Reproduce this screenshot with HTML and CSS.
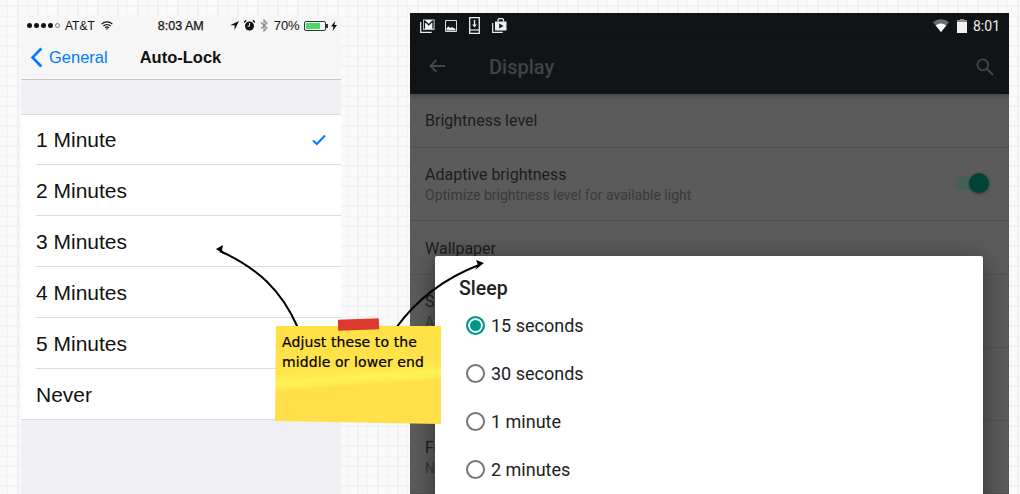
FILE: index.html
```html
<!DOCTYPE html>
<html lang="en">
<head>
    <meta charset="UTF-8">
    <title>Auto-Lock and Sleep settings</title>
    <link rel="stylesheet" href="styles.css">
</head>
<body>

<div class="board">
    <!-- iOS screen -->
    <div class="ios">
        <div class="ios-status">
            <span class="dots"><i></i><i></i><i></i><i></i><i class="empty"></i></span>
            <span class="carrier">AT&amp;T</span>
            <svg class="ios-wifi" width="12" height="9" viewBox="0 0 12 9"><path d="M.6 3.100a7.800 7.800 0 0 1 10.800 0M2.400 5a5.200 5.200 0 0 1 7.200 0M4.200 6.800a2.600 2.600 0 0 1 3.600 0" fill="none" stroke="#111" stroke-width="1.200"/><path d="M6 9 4.900 7.700a1.600 1.600 0 0 1 2.200 0z" fill="#111"/></svg>
            <span class="ios-time">8:03 AM</span>
            <svg class="ios-loc" width="9" height="9" viewBox="0 0 9 9"><path d="M9 0 0 4.200h4.600V9z" fill="#111"/></svg>
            <svg class="ios-alarm" width="11" height="11" viewBox="0 0 11 11"><circle cx="5.500" cy="6" r="4.500" fill="#111"/><path d="M5.500 3v3.200H3.500" fill="none" stroke="#f5f5f6" stroke-width="1"/><path d="M0 2.400 2.200.3M11 2.400 8.800.3" stroke="#111" stroke-width="1.400"/></svg>
            <svg class="ios-bt" width="8" height="13" viewBox="0 0 8 13"><path d="M1 3.500 7 9 4 12V1l3 3-6 5.500" fill="none" stroke="#8e8e8e" stroke-width="1.200"/></svg>
            <span class="ios-pct">70%</span>
            <span class="ios-battery"><span class="ios-charge"></span></span>
            <svg class="ios-bolt" width="6" height="10" viewBox="0 0 6 10"><path d="M4.200 0 0 5.600h2.400L1.600 10 6 4H3.400z" fill="#111"/></svg>
        </div>
        <div class="ios-nav">
            <svg class="chevron" width="13" height="21" viewBox="0 0 13 21"><path d="M11.300 1.500 2.500 10.500l8.800 9" fill="none" stroke="#007aff" stroke-width="2.600"/></svg>
            <span class="back-label">General</span>
            <span class="nav-title">Auto-Lock</span>
        </div>
        <ul class="ios-list">
            <li>1 Minute
                <svg class="check" width="14" height="12" viewBox="0 0 14 12"><path d="M1 6.600 4.800 10 13 1.500" fill="none" stroke="#007aff" stroke-width="2"/></svg>
            </li>
            <li>2 Minutes</li>
            <li>3 Minutes</li>
            <li>4 Minutes</li>
            <li>5 Minutes</li>
            <li>Never</li>
        </ul>
    </div>

    <!-- Android screen, dimmed behind the dialog -->
    <div class="android">
        <div class="droid-status">
            <svg width="15" height="14" viewBox="0 0 15 14"><path d="M.7 3v10.300h11" fill="none" stroke="#eee" stroke-width="1.200"/><path d="M3 .5h11.500v10.300H3z" fill="#eee"/><path d="M4.400 1.200v8.600M13 1.200v8.600M4.400 1.600l4.400 4.200 4.200-4.200" fill="none" stroke="#15181a" stroke-width="1.300"/></svg>
            <svg class="gap-image" width="12" height="12" viewBox="0 0 12 12"><path d="M.5.5h11v11H.5z" fill="#15181a" stroke="#ddd"/><path d="M1.500 10.500V8l2-1.500 2 1.500 1.500-1 3.500 2v1.500z" fill="#eee"/></svg>
            <svg class="gap-phone" width="11" height="17" viewBox="0 0 11 17"><path d="M.7.7h9.600v15.600H.7z" fill="none" stroke="#eee" stroke-width="1.300"/><path d="M.7 13h9.600" stroke="#eee" stroke-width="1.200"/><path d="M5.500 3v5.500" stroke="#eee" stroke-width="1.400"/><path d="M3.200 7.500h4.600L5.500 10.500z" fill="#eee"/></svg>
            <svg class="gap-store" width="15" height="15" viewBox="0 0 15 15"><path d="M.7 5v9.300h10" fill="none" stroke="#eee" stroke-width="1.200"/><path d="M3 3.500h11.500v9H3z" fill="#eee"/><path d="M6 3.500V2a1.500 1.500 0 0 1 1.500-1.300h2.500A1.500 1.500 0 0 1 11.500 2v1.500" fill="none" stroke="#eee" stroke-width="1.300"/><path d="M7.200 5.500v5l4.300-2.500z" fill="#15181a"/></svg>
            <span class="droid-right">
                <svg width="16" height="13" viewBox="0 0 16 13"><path d="M8 13 0 3.200a12.500 12.500 0 0 1 16 0z" fill="#6a6c6d"/><path d="M8 13 2.700 6.500a8.400 8.400 0 0 1 10.600 0z" fill="#fff"/></svg>
                <svg class="droid-batt" width="10" height="14" viewBox="0 0 10 14"><path d="M3 0h4v1.500h3V14H0V1.500h3z" fill="#f1f1f1"/><path d="M3 0h4v1.500h3V3H0V1.500h3z" fill="#8a8c8d"/></svg>
                <span class="droid-time">8:01</span>
            </span>
        </div>
        <div class="droid-bar">
            <svg class="droid-back" width="16" height="14" viewBox="0 0 16 14"><path d="M16 7H2M7.500 1 1.500 7l6 6" fill="none" stroke="#43484a" stroke-width="1.800"/></svg>
            <span class="droid-title">Display</span>
            <svg class="droid-search" width="18" height="18" viewBox="0 0 18 18"><circle cx="6.800" cy="6.800" r="5.400" fill="none" stroke="#43484a" stroke-width="1.800"/><path d="M10.800 10.800 17 17" stroke="#43484a" stroke-width="2"/></svg>
        </div>
        <div class="droid-row short first"><span class="row-name">Brightness level</span></div>
        <div class="droid-row">
            <span class="row-name">Adaptive brightness</span>
            <span class="row-sub">Optimize brightness level for available light</span>
            <span class="toggle"><span class="toggle-thumb"></span></span>
        </div>
        <div class="droid-row short"><span class="row-name">Wallpaper</span></div>
        <div class="droid-row">
            <span class="row-name">Sleep</span>
            <span class="row-sub">After 1 minute</span>
        </div>
        <div class="droid-row">
            <span class="row-name">Daydream</span>
            <span class="row-sub">Clock</span>
        </div>
        <div class="droid-row">
            <span class="row-name">Font size</span>
            <span class="row-sub">Normal</span>
        </div>

        <div class="dialog">
            <h2>Sleep</h2>
            <div class="option"><span class="radio on"></span>15 seconds</div>
            <div class="option"><span class="radio"></span>30 seconds</div>
            <div class="option"><span class="radio"></span>1 minute</div>
            <div class="option"><span class="radio"></span>2 minutes</div>
        </div>
    </div>

    <!-- Annotation -->
    <svg class="arrows" width="1020" height="494" viewBox="0 0 1020 494">
        <path d="M298 328C281 289 257 268 220 251" fill="none" stroke="#000" stroke-width="2"/>
        <path d="M216 249 223 245 222 250 225 255z" fill="#000"/>
        <path d="M396 328C417 299 445 278 479 265" fill="none" stroke="#000" stroke-width="2"/>
        <path d="M484 263 476 260 478 265 475 270z" fill="#000"/>
    </svg>
    <div class="note">
        <span class="tape"></span>
        <p>Adjust these to the<br>middle or lower end</p>
    </div>
</div>

</body>
</html>
```

FILE: styles.css
```css
body {
    margin: 0;
    font-family: "Liberation Sans", Arial, sans-serif;
}
.board {
    position: relative;
    display: flex;
    align-items: flex-start;
    height: 494px;
    overflow: hidden;
    background-color: #fafafa;
    background-image:
        linear-gradient(90deg, transparent 17px, #f1f1f1 17px, #f1f1f1 19px, transparent 19px),
        linear-gradient(90deg, transparent 7px, #f4f4f4 7px, #f4f4f4 8px, transparent 8px),
        linear-gradient(transparent 5px, #f1f1f1 5px, #f1f1f1 7px, transparent 7px),
        linear-gradient(transparent 16px, #f4f4f4 16px, #f4f4f4 17px, transparent 17px);
    background-size: 20px 20px;
}

/* iOS */
.ios {
    flex: none;
    width: 320px;
    height: 479px;
    margin: 15px 0 0 21px;
    background-color: #efeff4;
}
.ios-status {
    display: flex;
    align-items: center;
    height: 21px;
    padding-left: 6px;
    background-color: #f6f6f7;
    font-size: 12px;
    color: #111;
}
.dots {
    display: flex;
    gap: 2px;
}
.dots i {
    width: 5px;
    height: 5px;
    border-radius: 50%;
    background-color: #111;
}
.dots i.empty {
    box-sizing: border-box;
    border: 1px solid #777;
    background-color: transparent;
}
.carrier {
    margin-left: 5px;
}
.ios-wifi {
    margin-left: 6px;
}
.ios-time {
    margin-left: 45px;
    font-size: 12.500px;
    -webkit-text-stroke: 0.25px #111;
}
.ios-loc {
    margin-left: 26px;
}
.ios-alarm {
    margin-left: 5px;
}
.ios-bt {
    margin-left: 5px;
}
.ios-pct {
    margin-left: 6px;
    font-size: 13px;
}
.ios-battery {
    position: relative;
    box-sizing: border-box;
    width: 22px;
    height: 10px;
    margin-left: 4px;
    border: 1px solid #333;
    border-radius: 2px;
    padding: 1px;
}
.ios-battery::after {
    content: "";
    position: absolute;
    right: -3px;
    top: 2px;
    width: 2px;
    height: 4px;
    background-color: #333;
}
.ios-charge {
    display: block;
    width: 14px;
    height: 6px;
    background-color: #4cd964;
}
.ios-bolt {
    margin-left: 5px;
}
.ios-nav {
    display: flex;
    align-items: center;
    box-sizing: border-box;
    height: 44px;
    padding: 0 0 1px 9px;
    background-color: #f6f6f7;
    border-bottom: 1px solid #c8c7cc;
}
.back-label {
    margin-left: 6px;
    font-size: 16.500px;
    color: #007aff;
}
.nav-title {
    margin-left: 32px;
    font-size: 16.500px;
    font-weight: bold;
    color: #111;
}
.ios-list {
    list-style: none;
    margin: 34px 0 0;
    padding: 0 0 0 15px;
    background-color: #fff;
    border-top: 1px solid #dcdce0;
    border-bottom: 1px solid #dcdce0;
}
.ios-list li {
    position: relative;
    display: flex;
    align-items: center;
    height: 48px;
    padding-top: 2px;
    font-size: 21px;
    color: #111;
    border-bottom: 1px solid #dcdce0;
}
.ios-list li:first-child {
    padding-top: 1px;
}
.ios-list li:last-child {
    border-bottom: none;
}
.check {
    position: absolute;
    right: 15px;
    top: 19px;
}

/* Android */
.android {
    position: relative;
    flex: none;
    width: 599px;
    height: 481px;
    margin: 13px 0 0 69px;
    overflow: hidden;
    background-color: #5b5b5b;
    font-family: Roboto, sans-serif;
}
.droid-status {
    display: flex;
    align-items: center;
    height: 25px;
    padding: 0 9px 0 10px;
    background-color: #111416;
}
.gap-image {
    margin-left: 10px;
}
.gap-phone {
    margin-left: 12px;
}
.gap-store {
    margin-left: 12px;
}
.droid-right {
    display: flex;
    align-items: center;
    margin-left: auto;
}
.droid-batt {
    margin-left: 8px;
}
.droid-time {
    margin-left: 6px;
    font-size: 14px;
    color: #eee;
}
.droid-bar {
    position: relative;
    display: flex;
    align-items: center;
    height: 56px;
    padding: 0 15px 0 19px;
    background-color: #111416;
    box-shadow: 0 2px 5px rgba(0, 0, 0, 0.25);
}
.droid-title {
    margin: 2px 0 0 44px;
    font-size: 20px;
    font-weight: 500;
    color: #404346;
}
.droid-search {
    margin: 1px 0 0 auto;
}
.droid-row {
    position: relative;
    display: flex;
    flex-direction: column;
    justify-content: center;
    box-sizing: border-box;
    height: 73px;
    padding: 2px 0 0 15px;
    border-bottom: 1px solid #525252;
}
.droid-row.short {
    height: 54px;
}
.droid-row.first {
    padding-top: 1px;
}
.row-name {
    font-size: 16px;
    line-height: 20px;
    color: #1c1c1c;
}
.row-sub {
    font-size: 14px;
    line-height: 20px;
    color: #3a3a3a;
}
.toggle {
    position: absolute;
    left: 545px;
    top: 28px;
    width: 30px;
    height: 14px;
    border-radius: 7px;
    background-color: #465f59;
}
.toggle-thumb {
    position: absolute;
    right: -4px;
    top: -3px;
    width: 20px;
    height: 20px;
    border-radius: 50%;
    background-color: #004438;
    box-shadow: 0 1px 3px rgba(0, 0, 0, 0.4);
}
.dialog {
    position: absolute;
    left: 25px;
    top: 243px;
    width: 548px;
    height: 300px;
    box-sizing: border-box;
    padding: 21px 24px;
    background-color: #fff;
    border-radius: 2px;
    box-shadow: 0 4px 24px rgba(0, 0, 0, 0.45);
}
.dialog h2 {
    margin: 1px 0 1px;
    font-size: 19.500px;
    line-height: 22px;
    font-weight: 500;
    color: #212121;
}
.option {
    display: flex;
    align-items: center;
    gap: 6px;
    height: 48px;
    padding-left: 7px;
    font-size: 18px;
    color: #212121;
}
.radio {
    box-sizing: border-box;
    width: 19px;
    height: 19px;
    border: 2px solid #757575;
    border-radius: 50%;
}
.radio.on {
    border-color: #009688;
    background-color: #009688;
    box-shadow: inset 0 0 0 2px #fff;
}

/* Annotation */
.arrows {
    position: absolute;
    left: 0;
    top: 0;
}
.note {
    position: absolute;
    left: 275px;
    top: 326px;
    width: 166px;
    height: 98px;
    background: linear-gradient(176deg, #ffe044 0%, #ffe349 42%, #fff157 52%, #ffee52 56%, #ffe04b 60%, #ffe04b 100%);
    clip-path: polygon(0.6% -10%, 100% -10%, 100% 100%, 0 97%);
}
.tape {
    position: absolute;
    left: 63px;
    top: -7px;
    width: 41px;
    height: 11px;
    background-color: #dc3a2e;
    transform: rotate(-2deg);
}
.note p {
    margin: 6px 0 0 7px;
    font-family: "DejaVu Sans", sans-serif;
    font-size: 14px;
    letter-spacing: 0.1px;
    line-height: 20px;
    color: #000;
    -webkit-text-stroke: 0.2px #000;
}
```
